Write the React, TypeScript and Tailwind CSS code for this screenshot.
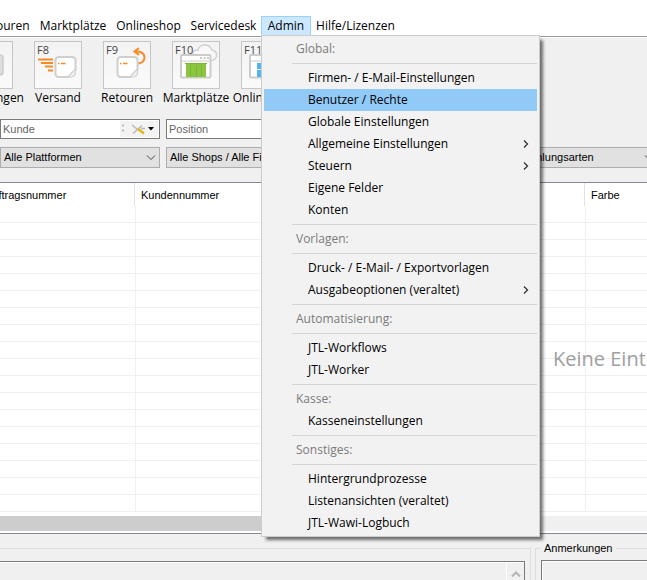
import { useState, type ReactNode } from "react";
import clsx from "clsx";

type MenuEntry =
  | { type: "header"; label: string }
  | { type: "item"; label: string; submenu?: boolean }
  | { type: "separator" };

const adminMenu: MenuEntry[] = [
  { type: "header", label: "Global:" },
  { type: "separator" },
  { type: "item", label: "Firmen- / E-Mail-Einstellungen" },
  { type: "item", label: "Benutzer / Rechte" },
  { type: "item", label: "Globale Einstellungen" },
  { type: "item", label: "Allgemeine Einstellungen", submenu: true },
  { type: "item", label: "Steuern", submenu: true },
  { type: "item", label: "Eigene Felder" },
  { type: "item", label: "Konten" },
  { type: "separator" },
  { type: "header", label: "Vorlagen:" },
  { type: "separator" },
  { type: "item", label: "Druck- / E-Mail- / Exportvorlagen" },
  { type: "item", label: "Ausgabeoptionen (veraltet)", submenu: true },
  { type: "separator" },
  { type: "header", label: "Automatisierung:" },
  { type: "separator" },
  { type: "item", label: "JTL-Workflows" },
  { type: "item", label: "JTL-Worker" },
  { type: "separator" },
  { type: "header", label: "Kasse:" },
  { type: "item", label: "Kasseneinstellungen" },
  { type: "separator" },
  { type: "header", label: "Sonstiges:" },
  { type: "separator" },
  { type: "item", label: "Hintergrundprozesse" },
  { type: "item", label: "Listenansichten (veraltet)" },
  { type: "item", label: "JTL-Wawi-Logbuch" },
];

const rows = Array.from({ length: 18 }, (_, i) => i);

function ParcelIcon() {
  return (
    <>
      <path
        d="M25 16h13q3.500 0 3.500 3.500v9l-7 7.500h-9.500q-3.500 0-3.500-3.500v-13q0-3.500 3.500-3.500z"
        fill="#fff"
        stroke="#cfcfcf"
        strokeWidth="2"
      />
      <path d="M34 36l7.500-8v4q0 4-4 4z" fill="#eee" stroke="#cfcfcf" />
      <path d="M24 22.500h1.500M27 22.500h4.500" stroke="#f68b28" strokeWidth="1.500" />
    </>
  );
}

function ShippingIcon() {
  return (
    <svg viewBox="1 1 46 46" className="size-full" fill="none">
      <path
        d="M4 18.500h15M7 22h12M11 25.500h8M14 29.500h5"
        stroke="#f68b28"
        strokeWidth="2"
      />
      <ParcelIcon />
    </svg>
  );
}

function ReturnsIcon() {
  return (
    <svg viewBox="1 1 46 46" className="size-full" fill="none">
      <g transform="translate(-7 0)">
        <ParcelIcon />
      </g>
      <path d="M33 10.500h2q6.500 1 6.500 6t-6 6" stroke="#f68b28" strokeWidth="2" />
      <path d="M36 7l-4.500 3.500 4.500 3.500" stroke="#f68b28" strokeWidth="2" />
    </svg>
  );
}

function MarketIcon() {
  return (
    <svg viewBox="1 1 46 46" className="size-full" fill="none">
      <path
        d="M21 14q-1-5 5-5 1-5 7-5 5 0 7 5 5 1 4.500 6-1 4.500-6 4.500z"
        fill="#f8f8f8"
        stroke="#d2d2d2"
        strokeWidth="1.500"
      />
      <rect x="9" y="14" width="29.500" height="22.500" rx="1" fill="#fff" stroke="#ccc" strokeWidth="2" />
      <path d="M9 20h30" stroke="#ccc" />
      <path d="M28 17h2M31.500 17h2M35 17h2" stroke="#bbb" strokeWidth="1.500" />
      <path d="M14 22h20v14H14z" fill="#8cc540" />
      <path d="M13 22.500h22M18.500 24v12M24.500 24v12M29.500 24v12" stroke="#7cb536" />
    </svg>
  );
}

function ShopIcon() {
  return (
    <svg viewBox="1 1 46 46" className="size-full" fill="none">
      <rect x="9" y="14" width="29.500" height="22.500" rx="1" fill="#fff" stroke="#ccc" strokeWidth="2" />
      <path d="M9 20h30" stroke="#ccc" />
      <path d="M16 22h5v6h-5zM22 22h8v6h-8zM16 29h5v7h-5zM22 29h8v7h-8z" fill="#53b5f3" />
    </svg>
  );
}

function InvoiceIcon() {
  return (
    <svg viewBox="1 1 46 46" className="size-full" fill="none">
      <rect x="16" y="14" width="22" height="20" rx="3" fill="#ddd" stroke="#ccc" strokeWidth="1.500" />
    </svg>
  );
}

const tools = [
  { key: "F7", label: "Rechnungen", icon: <InvoiceIcon /> },
  { key: "F8", label: "Versand", icon: <ShippingIcon /> },
  { key: "F9", label: "Retouren", icon: <ReturnsIcon /> },
  { key: "F10", label: "Marktplätze", icon: <MarketIcon /> },
  { key: "F11", label: "Onlineshop", icon: <ShopIcon /> },
];

function ToolButton({ hotkey, label, icon }: { hotkey: string; label: string; icon: ReactNode }) {
  return (
    <button type="button" className="flex w-12 shrink-0 flex-col items-center">
      <span className="relative size-12 border border-[#c6c6c6] bg-linear-to-b from-[#f3f3f3] to-[#fafafa]">
        {icon}
        <span className="absolute top-0 left-[2px] text-[11px] leading-[15px] text-[#444]">{hotkey}</span>
      </span>
      <span className="leading-[18px] whitespace-nowrap">{label}</span>
    </button>
  );
}

function MenuBarItem({ label, className }: { label: string; className: string }) {
  return (
    <button
      type="button"
      className={clsx("flex h-full shrink-0 items-center justify-center border border-transparent", className)}
    >
      {label}
    </button>
  );
}

function AdminMenu() {
  const [active, setActive] = useState("Benutzer / Rechte");

  return (
    <div
      role="menu"
      className="absolute top-full left-0 z-10 -mt-px w-[279px] border border-[#ccc] bg-[#f2f2f2] p-[2px] shadow-[4px_4px_3px_-1px_rgba(0,0,0,0.55)]"
    >
      {adminMenu.map((entry, i) => {
        if (entry.type === "separator") {
          return <div key={i} role="separator" className="my-[3px] ml-7 h-px bg-[#d5d5d5]" />;
        }
        if (entry.type === "header") {
          return (
            <div key={i} className="flex h-[22px] items-center pl-8 text-[#7b7b7b]">
              {entry.label}
            </div>
          );
        }
        return (
          <button
            key={i}
            type="button"
            role="menuitem"
            onMouseEnter={() => setActive(entry.label)}
            className={clsx(
              "flex h-[22px] w-full items-center justify-between pr-[7px] pl-11 text-left whitespace-nowrap",
              active === entry.label && "bg-[#91c9f7]",
            )}
          >
            {entry.label}
            {entry.submenu && (
              <svg viewBox="0 0 8 8" className="size-2" fill="none" stroke="#333" strokeWidth="1.300">
                <path d="M2 0.500L5.500 4 2 7.500" />
              </svg>
            )}
          </button>
        );
      })}
    </div>
  );
}

function FilterSelect({ label }: { label: string }) {
  return (
    <div className="relative w-40 shrink-0">
      <select
        aria-label={label}
        className="block h-[21px] w-full appearance-none border border-[#adadad] bg-[#e1e1e1] pr-5 pl-[3px]"
      >
        <option>{label}</option>
      </select>
      <svg
        viewBox="0 0 10 6"
        className="pointer-events-none absolute top-2 right-1 h-[6px] w-[10px]"
        fill="none"
        stroke="#444"
      >
        <path d="M1 0.500L5 4.500 9 0.500" />
      </svg>
    </div>
  );
}

export default function App() {
  return (
    <div className="flex h-screen flex-col overflow-hidden bg-[#f0f0f0] font-['Liberation_Sans',Arial,sans-serif] text-[11px] text-black">
      <nav className="border-b border-[#999] bg-white pt-4 font-['Open_Sans','Noto_Sans',sans-serif] text-[12px]">
        <div className="-ml-7 flex h-5">
          <MenuBarItem label="Retouren" className="w-[63px]" />
          <MenuBarItem label="Marktplätze" className="w-[76px]" />
          <MenuBarItem label="Onlineshop" className="w-[75px]" />
          <MenuBarItem label="Servicedesk" className="w-[75px]" />
          <div className="relative h-full w-[50px] shrink-0">
            <button
              type="button"
              aria-haspopup="menu"
              aria-expanded="true"
              className="flex h-full w-full items-center justify-center border border-[#99d1ff] bg-[#cce8ff]"
            >
              Admin
            </button>
            <AdminMenu />
          </div>
          <MenuBarItem label="Hilfe/Lizenzen" className="w-[89px]" />
        </div>
      </nav>

      <div className="-ml-[35px] flex gap-[21px] border-t border-white pt-[3px] pb-3 font-['Open_Sans','Noto_Sans',sans-serif] text-[12px]">
        {tools.map((tool) => (
          <ToolButton key={tool.key} hotkey={tool.key} label={tool.label} icon={tool.icon} />
        ))}
      </div>

      <div className="flex gap-[6px]">
        <div className="flex h-5 w-40 shrink-0 items-center border border-[#7a7a7a] bg-white pr-px">
          <input
            aria-label="Kunde"
            placeholder="Kunde"
            className="h-full min-w-0 flex-1 pl-[2px] outline-none placeholder:text-[#666]"
          />
          <button type="button" aria-label="Suchoptionen" className="h-4 w-[38px] bg-[#f3f3f3]">
            <svg viewBox="0 0 38 16" className="h-4 w-[38px]" fill="none">
              <path d="M2 4.500h2M2 9.500h2" stroke="#bbb" strokeWidth="2" />
              <path d="M13 12.500l9-8M12 4l5 4M21 7.500h4" stroke="#b8b8b8" strokeWidth="1.500" />
              <path d="M18 8l6 4.500" stroke="#e9b512" strokeWidth="2.500" />
              <path d="M28 6h6l-3 3.500z" fill="#000" />
            </svg>
          </button>
        </div>
        <input
          aria-label="Position"
          placeholder="Position"
          className="h-5 w-40 shrink-0 border border-[#7a7a7a] bg-white pl-[2px] placeholder:text-[#666]"
        />
      </div>

      <div className="mt-2 mb-[14px] flex gap-[6px]">
        <FilterSelect label="Alle Plattformen" />
        <FilterSelect label="Alle Shops / Alle Filialen" />
        <FilterSelect label="Alle Versandarten" />
        <FilterSelect label="Alle Zahlungsarten" />
      </div>

      <section className="relative shrink-0 border-y border-[#828790] bg-white">
        <table className="-ml-5 w-[calc(100%+20px)] table-fixed border-separate border-spacing-0">
          <colgroup>
            <col className="w-[156px]" />
            <col className="w-[450px]" />
            <col />
          </colgroup>
          <thead>
            <tr className="h-[23px] text-left">
              <th className="p-0 pr-px font-normal">
                <div className="h-[23px] border-r border-[#e2e2e2] pl-[5px] leading-[24px]">Auftragsnummer</div>
              </th>
              <th className="p-0 pr-px font-normal">
                <div className="h-[23px] border-r border-[#e2e2e2] pl-[5px] leading-[24px]">Kundennummer</div>
              </th>
              <th className="p-0 font-normal">
                <div className="h-[23px] pl-[5px] leading-[24px]">Farbe</div>
              </th>
            </tr>
          </thead>
          <tbody>
            {rows.map((row) => (
              <tr key={row} className="h-[17px]">
                <td className="border-r border-b border-[#f0f0f0] p-0" />
                <td className="border-r border-b border-[#f0f0f0] p-0" />
                <td className="border-b border-[#f0f0f0] p-0" />
              </tr>
            ))}
          </tbody>
        </table>
        {/* empty state lies over the grid lines */}
        <div className="absolute inset-y-0 left-[553px] flex items-center pt-[2px] font-['Open_Sans','Noto_Sans',sans-serif] text-[20px] whitespace-nowrap text-[#a0a0a0]">
          Keine Einträge
        </div>
        <div className="mt-1 mb-[2px] h-[15px] bg-[#f0f0f0]">
          <div className="h-full w-1/2 bg-[#cdcdcd]" />
        </div>
      </section>

      <div className="flex shrink-0 items-start gap-1 pt-2">
        <fieldset className="mt-[6px] -ml-2 w-[539px] shrink-0 border border-[#dcdcdc] p-[5px] pt-3">
          <div className="flex h-24 border border-[#7a7a7a]">
            <textarea aria-label="Details" className="h-full flex-1 resize-none border-t border-white" />
            <div className="w-[18px] border-t border-l border-white pt-2">
              <svg viewBox="0 0 10 6" className="mx-auto h-[6px] w-[10px]" fill="none" stroke="#b5b5b5" strokeWidth="2">
                <path d="M1 5.500L5 1.500 9 5.500" />
              </svg>
            </div>
          </div>
        </fieldset>
        <fieldset className="min-w-[160px] flex-1 border border-[#dcdcdc] p-[5px]">
          <legend className="px-[3px] leading-[13px]">
            <label htmlFor="notes">Anmerkungen</label>
          </legend>
          <textarea
            id="notes"
            className="block h-24 w-full resize-none border border-[#7a7a7a] shadow-[inset_1px_1px_0_#fff]"
          />
        </fieldset>
      </div>
    </div>
  );
}
